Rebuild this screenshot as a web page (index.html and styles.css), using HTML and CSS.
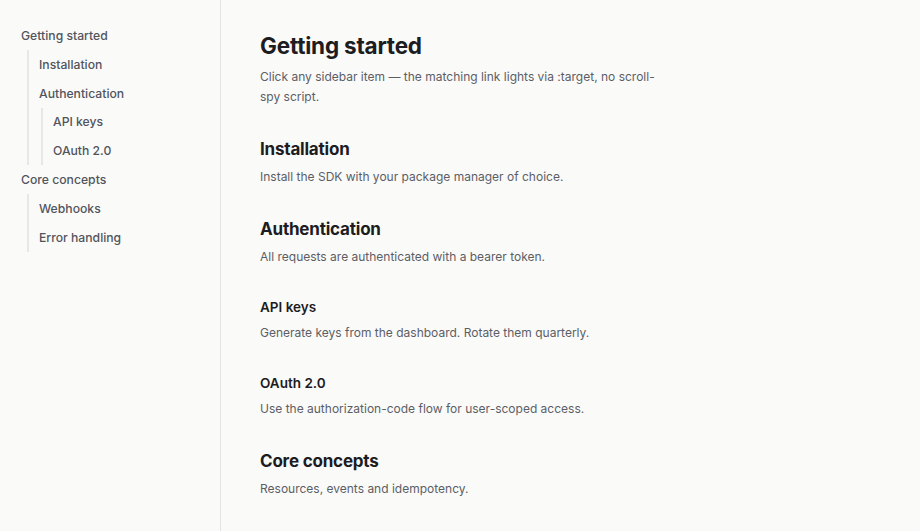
FILE: index.html
```html
<!DOCTYPE html>
<html lang="en">
<head>
<meta charset="utf-8">
<title>Docs</title>
<link rel="stylesheet" href="styles.css">
</head>
<body>
<div class="layout">
  <aside class="sidebar">
    <nav>
      <ul class="toc">
        <li><a href="#getting-started">Getting started</a>
          <ul class="toc sub">
            <li><a href="#installation">Installation</a></li>
            <li><a href="#authentication">Authentication</a>
              <ul class="toc sub">
                <li><a href="#api-keys">API keys</a></li>
                <li><a href="#oauth">OAuth 2.0</a></li>
              </ul>
            </li>
          </ul>
        </li>
        <li><a href="#core-concepts">Core concepts</a>
          <ul class="toc sub">
            <li><a href="#webhooks">Webhooks</a></li>
            <li><a href="#errors">Error handling</a></li>
          </ul>
        </li>
      </ul>
    </nav>
  </aside>
  <main class="content">
    <section id="getting-started" class="sec">
      <h1>Getting started</h1>
      <p>Click any sidebar item — the matching link lights via :target, no scroll-spy script.</p>
    </section>
    <section id="installation" class="sec">
      <h2>Installation</h2>
      <p>Install the SDK with your package manager of choice.</p>
    </section>
    <section id="authentication" class="sec">
      <h2>Authentication</h2>
      <p>All requests are authenticated with a bearer token.</p>
    </section>
    <section id="api-keys" class="sec">
      <h3>API keys</h3>
      <p>Generate keys from the dashboard. Rotate them quarterly.</p>
    </section>
    <section id="oauth" class="sec">
      <h3>OAuth 2.0</h3>
      <p>Use the authorization-code flow for user-scoped access.</p>
    </section>
    <section id="core-concepts" class="sec">
      <h2>Core concepts</h2>
      <p>Resources, events and idempotency.</p>
    </section>
  </main>
</div>
</body>
</html>
```
FILE: styles.css
```css
* { box-sizing: border-box; }
html, body { margin: 0; padding: 0; }
body {
  font-family: Inter, "Liberation Sans", sans-serif;
  background: #fafaf9;
  color: #1c1c21;
}
.layout {
  display: flex;
  min-height: 100vh;
}
.sidebar {
  width: 221px;
  flex: none;
  border-right: 1px solid #e4e4e7;
  padding: 21px 0 0 21px;
}
.toc {
  list-style: none;
  margin: 0;
  padding: 0;
}
.toc a {
  display: block;
  color: #52545c;
  text-decoration: none;
  font-size: 12.2px;
  font-weight: 500;
  line-height: 19px;
  padding: 4.93px 0;
}
.toc.sub {
  margin-left: 6px;
  border-left: 2px solid #e7e7e9;
  padding-left: 10px;
}
.toc.sub .toc.sub {
  margin-left: 2px;
  padding-left: 10px;
}
.content {
  flex: 1;
  padding: 30px 40px 0 39px;
}
.sec {
  max-width: 405px;
  margin-bottom: 29.5px;
}
h1 {
  font-size: 22.5px;
  font-weight: 700;
  line-height: 32px;
  margin: 0 0 5px;
  letter-spacing: -0.2px;
}
h2 {
  font-size: 17px;
  font-weight: 700;
  line-height: 24px;
  margin: 0 0 6.5px;
  letter-spacing: -0.2px;
}
h3 {
  font-size: 13.5px;
  font-weight: 600;
  line-height: 20px;
  margin: 0 0 6.5px;
}
p {
  font-size: 12px;
  line-height: 20px;
  color: #5c5e66;
  margin: 0;
}
```
